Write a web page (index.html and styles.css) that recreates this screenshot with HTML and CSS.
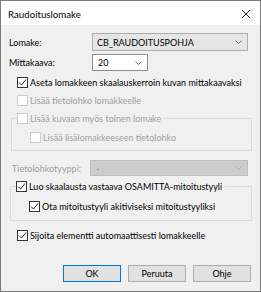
FILE: index.html
```html
<!DOCTYPE html>
<html lang="fi">
<head>
<meta charset="utf-8">
<title>Raudoituslomake</title>
<link rel="stylesheet" href="styles.css">
</head>
<body>
<div class="window">
  <div class="titlebar">
    <span class="title">Raudoituslomake</span>
    <svg class="close" width="10" height="10" viewBox="0 0 10 10"><path d="M1 1 L9 9 M9 1 L1 9" stroke="#222" stroke-width="1" fill="none"/></svg>
  </div>
  <div class="content">
    <div class="field-row row-lomake">
      <span class="label">Lomake:</span>
      <div class="combo combo-wide"><span class="combo-text">CB_RAUDOITUSPOHJA</span><svg class="chev" width="7" height="4" viewBox="0 0 7 4"><path d="M0.5 0.5 L3.5 3.5 L6.5 0.5" stroke="#707070" fill="none"/></svg></div>
    </div>
    <div class="field-row row-mitta">
      <span class="label">Mittakaava:</span>
      <div class="combo combo-small"><span class="combo-text">20</span><svg class="chev" width="7" height="4" viewBox="0 0 7 4"><path d="M0.5 0.5 L3.5 3.5 L6.5 0.5" stroke="#707070" fill="none"/></svg></div>
    </div>
    <div class="check c1"><span class="box checked"><svg width="9" height="9" viewBox="0 0 9 9"><path d="M1 4.5 L3.5 7 L8 1.5" stroke="#222" stroke-width="1" fill="none"/></svg></span><span class="ctext">Aseta lomakkeen skaalauskerroin kuvan mittakaavaksi</span></div>
    <div class="check c2 disabled"><span class="box"></span><span class="ctext">Lisää tietolohko lomakkeelle</span></div>
    <fieldset class="group g1">
      <legend class="check disabled"><span class="box"></span><span class="ctext">Lisää kuvaan myös toinen lomake</span></legend>
      <div class="check indent disabled"><span class="box"></span><span class="ctext">Lisää lisälomakkeeseen tietolohko</span></div>
    </fieldset>
    <div class="field-row row-tyyppi disabled">
      <span class="label">Tietolohkotyyppi:</span>
      <div class="combo combo-disabled"><span class="combo-text">-</span><svg class="chev" width="7" height="4" viewBox="0 0 7 4"><path d="M0.5 0.5 L3.5 3.5 L6.5 0.5" stroke="#a8a8a8" fill="none"/></svg></div>
    </div>
    <fieldset class="group g2">
      <legend class="check"><span class="box checked"><svg width="9" height="9" viewBox="0 0 9 9"><path d="M1 4.5 L3.5 7 L8 1.5" stroke="#222" stroke-width="1" fill="none"/></svg></span><span class="ctext">Luo skaalausta vastaava OSAMITTA-mitoitustyyli</span></legend>
      <div class="check indent"><span class="box checked"><svg width="9" height="9" viewBox="0 0 9 9"><path d="M1 4.5 L3.5 7 L8 1.5" stroke="#222" stroke-width="1" fill="none"/></svg></span><span class="ctext">Ota mitoitustyyli akitiviseksi mitoitustyyliksi</span></div>
    </fieldset>
    <div class="check c-sijoita"><span class="box checked"><svg width="9" height="9" viewBox="0 0 9 9"><path d="M1 4.5 L3.5 7 L8 1.5" stroke="#222" stroke-width="1" fill="none"/></svg></span><span class="ctext">Sijoita elementti automaattisesti lomakkeelle</span></div>
    <div class="buttons">
      <button class="btn btn-default">OK</button>
      <button class="btn">Peruuta</button>
      <button class="btn">Ohje</button>
    </div>
  </div>
</div>
</body>
</html>
```
FILE: styles.css
```css
* { box-sizing: border-box; }
html, body { margin: 0; padding: 0; background: #ffffff; }
body { font-family: "Lato", "Liberation Sans", sans-serif; font-size: 9px; color: #000; }

.window {
  width: 261px; height: 292px;
  border: 1px solid #7a7a7a;
  background: #f0f0f0;
  display: flex; flex-direction: column;
}
.titlebar {
  height: 24px; background: #ffffff;
  display: flex; align-items: center; justify-content: space-between;
  padding: 1px 9px 0 7px;
  flex: none;
}
.title { font-size: 9.7px; color: #000; }
.close { display: block; }

.content {
  flex: 1;
  display: flex; flex-direction: column;
  padding: 0 8px 0 8px;
}

.field-row { display: flex; align-items: center; height: 18px; }
.label { width: 83px; flex: none; }
.row-lomake { margin-top: 8px; }
.row-mitta { margin-top: 3px; height: 17px; }

.combo {
  height: 100%;
  display: flex; align-items: center; justify-content: space-between;
  padding: 0 5px 0 4px;
  border: 1px solid #adadad;
}
.combo-wide { flex: none; width: 156px; background: #e5e5e5; }
.combo-small { width: 56px; background: #ffffff; border-color: #8f8f8f; padding-left: 5px; }
.combo-text { line-height: 1; }
.chev { display: block; }

.check { display: flex; align-items: center; height: 11px; line-height: 11px; }
.box {
  width: 11px; height: 11px; flex: none;
  border: 1px solid #333333; background: #ffffff;
  display: flex; align-items: center; justify-content: center;
  margin-right: 2px;
}
.box svg { display: block; }
.disabled { color: #a0a0a0; }
.disabled .box { border-color: #cccccc; background: #ffffff; }

.c1 { margin-top: 6px; margin-left: 8px; }
.c2 { margin-top: 7px; margin-left: 8px; }

.group {
  margin: 0; min-width: 0;
  border: 1px solid #dcdcdc;
  padding: 0 5px 0 5px;
}
.group legend { padding: 0 3px 0 0; margin: 0; }
.g1 { margin-top: 7px; margin-left: 2px; height: 38px; }
.g1 .indent { margin-top: 8px; margin-left: 13px; }
.g2 { margin-top: 5px; margin-left: 1px; height: 40px; }
.g2 .indent { margin-top: 9px; margin-left: 13px; }

.row-tyyppi { margin-top: 9px; height: 16px; }
.row-tyyppi .label { width: 81px; padding-left: 3px; }
.combo-disabled { flex: none; width: 158px; background: #cccccc; border-color: #bfbfbf; color: #8a8a8a; padding-left: 5px; }

.c-sijoita { margin-top: 9px; margin-left: 8px; }

.buttons {
  margin-top: auto; margin-bottom: 9px;
  display: flex; justify-content: flex-end; gap: 7px;
  padding-right: 1px;
}
.btn {
  width: 58px; height: 17px;
  font-family: inherit; font-size: 9px; color: #000;
  background: #e1e1e1; border: 1px solid #adadad;
  padding: 0; line-height: 1;
}
.btn-default { border-color: #0078d7; }
```
